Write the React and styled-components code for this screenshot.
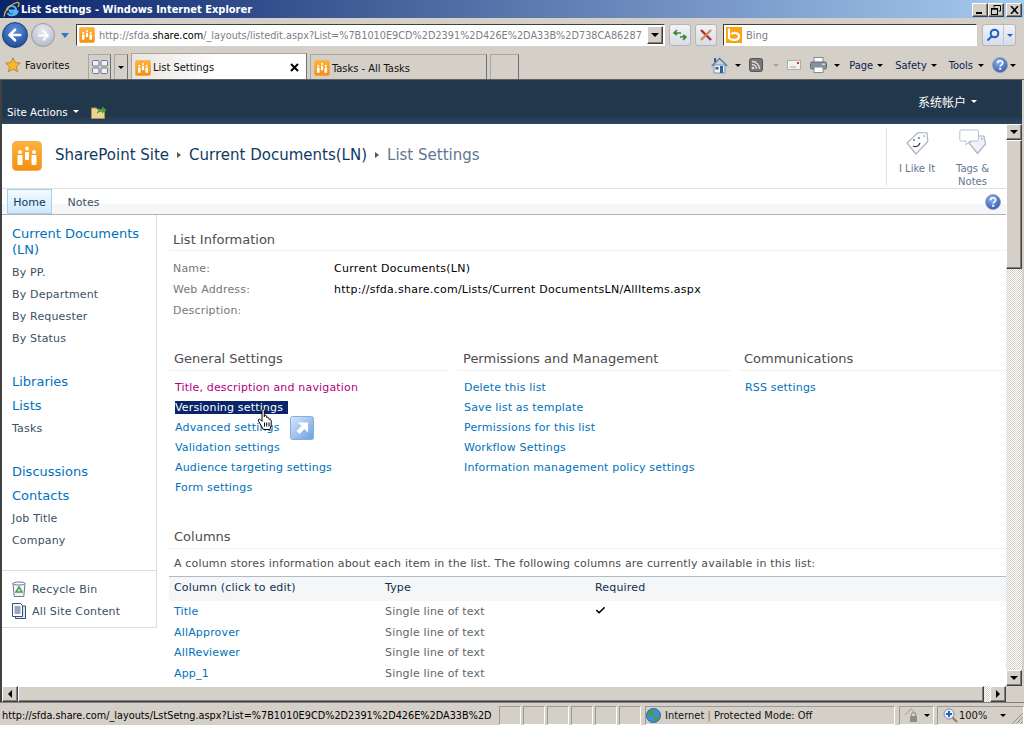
import styled, { createGlobalStyle } from "styled-components";
import { ArrowLeft, ArrowRight, Check } from "lucide-react";

const GlobalStyle = createGlobalStyle`
  html, body {
    margin: 0;
    padding: 0;
    background: #fff;
    overflow: hidden;
  }
  * { box-sizing: border-box; }
`;

const chrome = `"DejaVu Sans Condensed", "Noto Sans", Tahoma, sans-serif`;
const verdana = `"DejaVu Sans", Verdana, sans-serif`;
const bevel = `
  background: #d4d0c8;
  border-style: solid;
  border-width: 1px;
  border-color: #fff #404040 #404040 #fff;
  box-shadow: inset -1px -1px 0 #808080;
`;

const generalLinks = [
  "Versioning settings",
  "Advanced settings",
  "Validation settings",
  "Audience targeting settings",
  "Form settings",
];
const permissionLinks = [
  "Delete this list",
  "Save list as template",
  "Permissions for this list",
  "Workflow Settings",
  "Information management policy settings",
];
const columns = [
  { name: "Title", required: true, height: 21 },
  { name: "AllApprover", height: 21 },
  { name: "AllReviewer", height: 19 },
  { name: "App_1", height: 23 },
];

function SiteIcon({ size = 16 }) {
  return (
    <svg width={size} height={size} viewBox="0 0 30 30" style={{ flex: "none" }}>
      <defs>
        <linearGradient id="siteOrange" x1="0" y1="0" x2="0" y2="1">
          <stop offset="0" stopColor="#ffb33a" />
          <stop offset="1" stopColor="#f78e0c" />
        </linearGradient>
      </defs>
      <rect x="0.5" y="0.5" width="29" height="29" rx="4" fill="url(#siteOrange)" stroke="#e8b060" />
      <g fill="#fff">
        <circle cx="8" cy="11" r="2" />
        <rect x="5.5" y="14" width="5" height="10" rx="1" />
        <circle cx="15" cy="7.5" r="2" />
        <rect x="13" y="11" width="4" height="8" rx="1" />
        <circle cx="22" cy="11" r="2" />
        <rect x="19.5" y="14" width="5" height="10" rx="1" />
      </g>
    </svg>
  );
}

function IeLogo() {
  return (
    <svg width="17" height="17" viewBox="0 0 17 17">
      <path d="M4 9.5a4.6 4.6 0 0 1 9.2 0H6.6c.2 2.6 3.6 3 5.6 1h2.4c-1.8 4.4-8 5-10.2 1.4" fill="none" stroke="#58b4ee" strokeWidth="2" />
      <path d="M1.5 15.5C.2 12 6 3.500 14 1.500c2.500-.5 2.500 2 1 4.500" fill="none" stroke="#f2b632" strokeWidth="1.200" />
    </svg>
  );
}

function StarIcon() {
  return (
    <svg width="16" height="16" viewBox="0 0 16 16">
      <path d="M8 .8l2.200 4.700 5 .6-3.700 3.500 1 5.100L8 12.200l-4.500 2.500 1-5.100L.8 6.100l5-.6z" fill="#f9b82c" stroke="#b8741a" strokeWidth=".8" />
    </svg>
  );
}

function QuickTabsIcon() {
  return (
    <svg width="16" height="14" viewBox="0 0 16 14" fill="#eef0f6" stroke="#6f7893">
      <rect x=".5" y=".5" width="6.500" height="5.500" rx="1" />
      <rect x="9" y=".5" width="6.500" height="5.500" rx="1" />
      <rect x=".5" y="8" width="6.500" height="5.500" rx="1" />
      <rect x="9" y="8" width="6.500" height="5.500" rx="1" />
    </svg>
  );
}

function BingIcon() {
  return (
    <svg width="16" height="16" viewBox="0 0 16 16">
      <rect width="16" height="16" fill="#f9a40f" />
      <path d="M3 1.500v9.500c3 3 10 2.500 10-1.500 0-4-6-4.500-7.500-2" fill="none" stroke="#fff" strokeWidth="2.200" />
    </svg>
  );
}

function RefreshIcon() {
  return (
    <svg width="14" height="14" viewBox="0 0 14 14" fill="none" stroke="#3d8a2c" strokeWidth="1.700">
      <path d="M1.500 5H8M4 2L1 5l3 2" />
      <path d="M12.500 9H7M10 12l3-3-3-2" />
    </svg>
  );
}

function StopIcon() {
  return (
    <svg width="12" height="12" viewBox="0 0 12 12" fill="none" strokeWidth="2.400">
      <path d="M1 1l10 10" stroke="#a53040" />
      <path d="M11 1L1 11" stroke="#d68a4a" />
    </svg>
  );
}

function SearchIcon() {
  return (
    <svg width="14" height="14" viewBox="0 0 14 14" fill="none" stroke="#1c5fd0" strokeWidth="2">
      <circle cx="8.500" cy="5.500" r="3.800" />
      <path d="M5.500 8.500L1.500 12.500" />
    </svg>
  );
}

function HomeIcon() {
  return (
    <svg width="17" height="17" viewBox="0 0 17 17">
      <path d="M3 8v8h11V8z" fill="#eef3fa" stroke="#7a8fa8" />
      <path d="M.8 9l7.700-7.500L16.200 9" fill="none" stroke="#4f7fb8" strokeWidth="1.500" />
      <rect x="3" y="1" width="2" height="4" fill="#2e5f9e" />
      <rect x="9" y="9" width="3" height="7" fill="#2e5f9e" />
      <rect x="4.500" y="10" width="3" height="2.500" fill="#2e5f9e" />
    </svg>
  );
}

function FeedIcon() {
  return (
    <svg width="14" height="14" viewBox="0 0 14 14">
      <rect x=".5" y=".5" width="13" height="13" rx="2" fill="#77777a" stroke="#555" />
      <circle cx="4" cy="10" r="1.300" fill="#ddd" />
      <path d="M3 6.500a4.500 4.500 0 0 1 4.500 4.500M3 3.500a7.500 7.500 0 0 1 7.500 7.500" fill="none" stroke="#ddd" strokeWidth="1.300" />
    </svg>
  );
}

function MailIcon() {
  return (
    <svg width="14" height="10" viewBox="0 0 14 10">
      <rect x=".5" y=".5" width="13" height="9" fill="#f1f0ec" stroke="#b0aea8" />
      <rect x="10" y="2" width="2" height="2" fill="#c04040" />
      <path d="M3 7h6" stroke="#aaa" />
    </svg>
  );
}

function PrintIcon() {
  return (
    <svg width="17" height="16" viewBox="0 0 17 16">
      <rect x="4" y=".5" width="9" height="5" fill="#fff" stroke="#8a8a8a" />
      <rect x=".5" y="5" width="16" height="7" rx="1.500" fill="#8793a0" stroke="#5f6872" />
      <rect x="4" y="10" width="9" height="5.500" fill="#fff" stroke="#8a8a8a" />
      <rect x="12" y="6.500" width="3" height="1.500" fill="#bfe0f0" />
    </svg>
  );
}

function HelpIcon({ size = 16 }) {
  return (
    <svg width={size} height={size} viewBox="0 0 16 16">
      <defs>
        <radialGradient id="helpBlue" cx=".4" cy=".3" r=".8">
          <stop offset="0" stopColor="#8fb0e8" />
          <stop offset="1" stopColor="#2b55a8" />
        </radialGradient>
      </defs>
      <circle cx="8" cy="8" r="7.500" fill="url(#helpBlue)" stroke="#8f98ad" strokeWidth=".7" />
      <path d="M5.500 6.200c0-3.200 5.200-3.200 5.200-.2 0 1.900-2.500 1.800-2.500 3.600" fill="none" stroke="#fff" strokeWidth="1.700" />
      <rect x="7.200" y="10.800" width="2" height="2" fill="#fff" />
    </svg>
  );
}

function FolderUpIcon() {
  return (
    <svg width="16" height="15" viewBox="0 0 16 15">
      <path d="M.5 4h5l1 1.500h7v9H.5z" fill="#e9d68e" stroke="#a59256" />
      <path d="M6 10c0-3 2-5 5-5V2.500L15.500 6 11 9.500V7.500c-2 0-4 1-5 2.500z" fill="#4c9a3c" />
    </svg>
  );
}

function LikeIcon() {
  return (
    <svg width="26" height="26" viewBox="0 0 26 26">
      <path d="M3 13L14 2.500l9 .5.800 8.500L12 24z" fill="#fff" stroke="#aab4c8" strokeWidth="1.200" />
      <circle cx="20" cy="6" r="1" fill="#aab4c8" />
      <path d="M10 9v2M15 7v2" stroke="#333" />
      <path d="M9 16c3 1.500 6 0 7-3" fill="none" stroke="#333" strokeWidth="1.200" />
    </svg>
  );
}

function TagsIcon() {
  return (
    <svg width="28" height="28" viewBox="0 0 28 26">
      <path d="M10 14l7-7h8l1.500 8-8 9.500z" fill="#eef1f6" stroke="#aab4c8" strokeWidth="1.200" />
      <circle cx="23" cy="10" r="1" fill="#aab4c8" />
      <path d="M2 1h16a1.500 1.500 0 0 1 1.500 1.500v8a1.500 1.500 0 0 1-1.500 1.500h-7l-4 4v-4H2A1.500 1.500 0 0 1 .8 10.500v-8A1.500 1.500 0 0 1 2 1z" fill="#fff" stroke="#b8c0d0" />
    </svg>
  );
}

function RecycleIcon() {
  return (
    <svg width="14" height="16" viewBox="0 0 14 16">
      <path d="M1 2.500h12l-1.200 13H2.200z" fill="#f2f4f8" stroke="#6a7890" />
      <ellipse cx="7" cy="2.500" rx="6" ry="1.500" fill="#fff" stroke="#6a7890" />
      <path d="M7 6l3 5H4z" fill="none" stroke="#4b9a58" strokeWidth="1.500" />
    </svg>
  );
}

function ContentIcon() {
  return (
    <svg width="14" height="16" viewBox="0 0 14 16">
      <path d="M3.500 3h10v12.500h-10z" fill="#dfe6f2" stroke="#37507a" />
      <path d="M.5.500h8l2 2v11h-10z" fill="#fff" stroke="#37507a" />
      <path d="M2.500 4h6M2.500 6h6M2.500 8h6M2.500 10h6" stroke="#37507a" />
    </svg>
  );
}

function GlobeIcon() {
  return (
    <svg width="15" height="15" viewBox="0 0 16 16">
      <circle cx="8" cy="8" r="7.500" fill="#3f8fd8" stroke="#2f5f8f" />
      <path d="M3 4c2-2 5-2 6 0s-1 3-2 4-2 2-3 1-2-3-1-5zM9 10c2-1 4-1 5 0-1 3-3 4-5 4-1-1-1-3 0-4z" fill="#4f9a45" />
    </svg>
  );
}

function LockIcon() {
  return (
    <svg width="15" height="15" viewBox="0 0 15 15">
      <path d="M1 7l6-6 6 6" fill="none" stroke="#b4b2ac" strokeWidth="1.500" />
      <rect x="6" y="8" width="7" height="6" fill="#8f8d88" />
      <path d="M7.500 8V6.500a2 2 0 0 1 4 0V8" fill="none" stroke="#8f8d88" />
    </svg>
  );
}

function ZoomIcon() {
  return (
    <svg width="15" height="15" viewBox="0 0 15 15">
      <circle cx="6" cy="6" r="5" fill="#e8f0fa" stroke="#7f8ea5" />
      <path d="M6 3v6M3 6h6" stroke="#2660c8" strokeWidth="2" />
      <path d="M9.500 9.500l4.500 4.500" stroke="#a0785a" strokeWidth="2" />
    </svg>
  );
}

function ResizeGrip() {
  return (
    <svg width="12" height="12" viewBox="0 0 12 12" fill="none" stroke="#8e8c86">
      <path d="M11.500 1.500l-10 10M11.500 5.500l-6 6M11.500 9.500l-2 2" />
    </svg>
  );
}

function HandCursor() {
  return (
    <svg width="18" height="23" viewBox="0 0 18 23">
      <path
        d="M5 1.500c1-.9 2.300-.3 2.300 1v6.200l.3-1c1-.7 2-.2 2 .7l.2 1.300c.9-.8 2-.3 2 .7l.2 1c1-.6 2.200 0 2.200 1.200v4.600l-1.300 4.300H6.300L1.500 13c-.8-1.200.6-2.500 1.800-1.500L5 13.300z"
        fill="#fff"
        stroke="#000"
      />
      <path d="M7.500 14.500v4M9.700 14.500v4M12 14.500v4" stroke="#000" />
    </svg>
  );
}

function ShortcutBadge() {
  return (
    <svg width="24" height="24" viewBox="0 0 24 24">
      <defs>
        <linearGradient id="badgeBlue" x1="0" y1="0" x2="1" y2="1">
          <stop offset="0" stopColor="#d8e8fa" />
          <stop offset="1" stopColor="#6d9fe0" />
        </linearGradient>
      </defs>
      <rect x=".5" y=".5" width="23" height="23" rx="2" fill="url(#badgeBlue)" stroke="#82aee4" />
      <path d="M8 6.500h10v10l-3.500-3.500-5 5-3-3 5-5z" fill="#fff" />
    </svg>
  );
}

function Caret({ color = "#000", size = 3 }) {
  return <CaretShape $color={color} $size={size} />;
}

export default function App() {
  return (
    <Window>
      <GlobalStyle />
      <TitleBar>
        <IeLogo />
        <TitleText>List Settings - Windows Internet Explorer</TitleText>
        <WindowButtons>
          <WindowButton>
            <svg width="8" height="8" viewBox="0 0 8 8"><rect y="6" width="6" height="2" /></svg>
          </WindowButton>
          <WindowButton>
            <svg width="10" height="10" viewBox="0 0 10 10" fill="none" stroke="#000">
              <path d="M3 2.500V.5h6.500v5.500H7.500" strokeWidth="1" />
              <rect x=".5" y="3.500" width="6" height="6" />
              <path d="M1 4h5" strokeWidth="1.500" />
            </svg>
          </WindowButton>
          <WindowButton $gap>
            <svg width="9" height="8" viewBox="0 0 9 8" stroke="#000" strokeWidth="1.500"><path d="M1 0l7 8M8 0L1 8" /></svg>
          </WindowButton>
        </WindowButtons>
      </TitleBar>

      <NavRow>
        <NavDisc>
          <ArrowLeft size={18} color="#fff" strokeWidth={3.5} />
        </NavDisc>
        <NavDisc $off>
          <ArrowRight size={15} color="#fff" strokeWidth={3} />
        </NavDisc>
        <RecentCaret />
        <AddressBox>
          <SiteIcon size={16} />
          <AddressText>
            http://sfda.<b>share.com</b>/_layouts/listedit.aspx?List=%7B1010E9CD%2D2391%2D426E%2DA33B%2D738CA86287
          </AddressText>
          <ComboButton><Caret size={4} /></ComboButton>
        </AddressBox>
        <SoftButton><RefreshIcon /></SoftButton>
        <SoftButton><StopIcon /></SoftButton>
        <SearchBox>
          <BingIcon />
          <SearchText>Bing</SearchText>
        </SearchBox>
        <SearchButtons>
          <SearchGo><SearchIcon /></SearchGo>
          <SearchMore><Caret color="#1c5fd0" /></SearchMore>
        </SearchButtons>
      </NavRow>

      <ToolRow>
        <Favorites>
          <StarIcon />
          <span>Favorites</span>
        </Favorites>
        <SquareTab $width={23}><QuickTabsIcon /></SquareTab>
        <SquareTab $width={14}><Caret /></SquareTab>
        <Tab $active>
          <SiteIcon size={16} />
          <TabLabel>List Settings</TabLabel>
          <TabClose>
            <svg width="9" height="9" viewBox="0 0 9 9" stroke="#000" strokeWidth="2"><path d="M1 1l7 7M8 1L1 8" /></svg>
          </TabClose>
        </Tab>
        <Tab>
          <SiteIcon size={16} />
          <TabLabel>Tasks - All Tasks</TabLabel>
        </Tab>
        <SquareTab $width={29} />
        <Commands>
          <Command $gap={7}><HomeIcon /><Caret /></Command>
          <Command $gap={10} $left={8}><FeedIcon /><Caret color="#a8a69f" /></Command>
          <Command $left={8}><MailIcon /></Command>
          <Command $gap={7} $left={9}><PrintIcon /><Caret /></Command>
          <Command $gap={4} $left={9}>Page<Caret /></Command>
          <Command $gap={4} $left={12}>Safety<Caret /></Command>
          <Command $gap={5} $left={12}>Tools<Caret /></Command>
          <Command $gap={2} $left={8}><HelpIcon /><Caret /></Command>
        </Commands>
      </ToolRow>

      <SiteBand>
        <SiteActions>
          <span>Site Actions</span>
          <Caret color="#fff" />
          <FolderSlot><FolderUpIcon /></FolderSlot>
        </SiteActions>
        <Account>
          <span>系统帐户</span>
          <Caret color="#fff" />
        </Account>
      </SiteBand>

      <Viewport>
        <PageArea>
          <TitleRow>
            <SiteIcon size={30} />
            <Breadcrumb>
              <span>SharePoint Site</span>
              <CrumbArrow />
              <span>Current Documents(LN)</span>
              <CrumbArrow />
              <CrumbCurrent>List Settings</CrumbCurrent>
            </Breadcrumb>
            <Social>
              <SocialItem $width={60} $top={2}><LikeIcon /><span>I Like It</span></SocialItem>
              <SocialItem $width={51}><TagsIcon /><span>Tags &amp;<br />Notes</span></SocialItem>
            </Social>
          </TitleRow>

          <TabStrip>
            <PageTab $active>Home</PageTab>
            <PageTab>Notes</PageTab>
            <StripHelp><HelpIcon size={16} /></StripHelp>
          </TabStrip>

          <Columns>
            <SideNav>
              <SideTop>
                <NavHeading>Current Documents (LN)</NavHeading>
                <NavItem>By PP.</NavItem>
                <NavItem>By Department</NavItem>
                <NavItem>By Requester</NavItem>
                <NavItem>By Status</NavItem>
                <NavHeading $top={24}>Libraries</NavHeading>
                <NavHeading $top={8}>Lists</NavHeading>
                <NavItem>Tasks</NavItem>
                <NavHeading $top={24}>Discussions</NavHeading>
                <NavHeading $top={8}>Contacts</NavHeading>
                <NavItem>Job Title</NavItem>
                <NavItem>Company</NavItem>
              </SideTop>
              <SideBottom>
                <SideLink><RecycleIcon />Recycle Bin</SideLink>
                <SideLink><ContentIcon />All Site Content</SideLink>
              </SideBottom>
            </SideNav>

            <Content>
              <InfoHeading>List Information</InfoHeading>
              <InfoRows>
                <InfoRow><InfoLabel>Name:</InfoLabel><InfoValue>Current Documents(LN)</InfoValue></InfoRow>
                <InfoRow><InfoLabel>Web Address:</InfoLabel><InfoValue>http://sfda.share.com/Lists/Current DocumentsLN/AllItems.aspx</InfoValue></InfoRow>
                <InfoRow><InfoLabel>Description:</InfoLabel><InfoValue /></InfoRow>
              </InfoRows>

              <Settings>
                <SettingsColumn>
                  <SectionHeading>General Settings</SectionHeading>
                  <SettingsLink $visited>Title, description and navigation</SettingsLink>
                  {generalLinks.map((link, i) => (
                    <SettingsLink key={link}>
                      {i === 0 ? <Selected>{link}</Selected> : link}
                    </SettingsLink>
                  ))}
                  <BadgeLayer><ShortcutBadge /></BadgeLayer>
                  <CursorLayer><HandCursor /></CursorLayer>
                </SettingsColumn>
                <SettingsColumn>
                  <SectionHeading>Permissions and Management</SectionHeading>
                  {permissionLinks.map((link) => (
                    <SettingsLink key={link}>{link}</SettingsLink>
                  ))}
                </SettingsColumn>
                <SettingsColumn>
                  <SectionHeading>Communications</SectionHeading>
                  <SettingsLink>RSS settings</SettingsLink>
                </SettingsColumn>
              </Settings>

              <SectionHeading>Columns</SectionHeading>
              <ColumnsNote>A column stores information about each item in the list. The following columns are currently available in this list:</ColumnsNote>
              <TableHead>
                <span>Column (click to edit)</span>
                <span>Type</span>
                <span>Required</span>
              </TableHead>
              {columns.map((col) => (
                <TableRow key={col.name} $height={col.height}>
                  <ColumnName>{col.name}</ColumnName>
                  <ColumnType>Single line of text</ColumnType>
                  <span>{col.required && <Check size={11} color="#000" strokeWidth={3.5} />}</span>
                </TableRow>
              ))}
            </Content>
          </Columns>
        </PageArea>

        <VScroll>
          <ScrollButton><Caret size={4} /></ScrollButton>
          <VThumb />
          <Checker />
          <ScrollButton><DownCaret /></ScrollButton>
        </VScroll>
      </Viewport>

      <HScroll>
        <ScrollButton><LeftCaret /></ScrollButton>
        <HThumb />
        <Checker $narrow />
        <ScrollButton><RightCaret /></ScrollButton>
        <ScrollCorner />
      </HScroll>

      <StatusBar>
        <StatusUrl>http://sfda.share.com/_layouts/LstSetng.aspx?List=%7B1010E9CD%2D2391%2D426E%2DA33B%2D</StatusUrl>
        {[1, 2, 3, 4, 5, 6].map((n) => <StatusCell key={n} />)}
        <ZoneCell>
          <GlobeIcon />
          <span>Internet <ZoneBar>|</ZoneBar> Protected Mode: Off</span>
        </ZoneCell>
        <SecurityCell><LockIcon /><Caret /></SecurityCell>
        <ZoomCell>
          <ZoomIcon />
          <span>100%</span>
          <ZoomCaret><Caret /></ZoomCaret>
          <GripSlot><ResizeGrip /></GripSlot>
        </ZoomCell>
      </StatusBar>
    </Window>
  );
}

const Window = styled.div`
  width: 1024px;
  height: 726px;
  display: flex;
  flex-direction: column;
  background: #d4d0c8;
  font-family: ${chrome};
  font-size: 11px;
  color: #111;
  overflow: hidden;
`;

const CaretShape = styled.i`
  display: inline-block;
  flex: none;
  width: 0;
  height: 0;
  border-left: ${(p) => p.$size}px solid transparent;
  border-right: ${(p) => p.$size}px solid transparent;
  border-top: ${(p) => p.$size}px solid ${(p) => p.$color};
`;

const TitleBar = styled.div`
  height: 18px;
  flex: none;
  display: flex;
  align-items: center;
  padding: 0 2px 0 3px;
  background: linear-gradient(90deg, #0a246a, #a6caf0);
`;

const TitleText = styled.span`
  margin-left: 1px;
  color: #fff;
  font-weight: bold;
  font-size: 11px;
`;

const WindowButtons = styled.div`
  margin-left: auto;
  display: flex;
  margin-top: 1px;
`;

const WindowButton = styled.div`
  ${bevel}
  width: 16px;
  height: 14px;
  margin-left: ${(p) => (p.$gap ? 2 : 0)}px;
  display: flex;
  align-items: center;
  justify-content: center;
`;

const NavRow = styled.div`
  height: 34px;
  flex: none;
  display: flex;
  align-items: center;
  padding-left: 2px;
`;

const NavDisc = styled.div`
  flex: none;
  width: ${(p) => (p.$off ? 24 : 26)}px;
  height: ${(p) => (p.$off ? 24 : 26)}px;
  margin-left: ${(p) => (p.$off ? 3 : 0)}px;
  border-radius: 50%;
  display: flex;
  align-items: center;
  justify-content: center;
  border: 1px solid ${(p) => (p.$off ? "#9a9a9a" : "#1c3f7a")};
  background: ${(p) =>
    p.$off
      ? "radial-gradient(circle at 50% 30%, #e8ecf4, #a9b1c2)"
      : "radial-gradient(circle at 50% 30%, #5c8fdc, #12418c)"};
`;

const RecentCaret = styled.div`
  width: 0;
  height: 0;
  margin-left: 6px;
  border-left: 4px solid transparent;
  border-right: 4px solid transparent;
  border-top: 5px solid #2d79c8;
`;

const AddressBox = styled.div`
  width: 589px;
  height: 22px;
  margin-left: 7px;
  display: flex;
  align-items: center;
  padding-left: 2px;
  background: #fff;
  border: 1px solid;
  border-color: #404040 #fff #fff #404040;
`;

const AddressText = styled.div`
  flex: 1;
  min-width: 0;
  margin-left: 4px;
  color: #808080;
  white-space: nowrap;
  font-size: 10.8px;
  b {
    font-weight: normal;
    color: #000;
  }
`;

const ComboButton = styled.div`
  ${bevel}
  flex: none;
  width: 16px;
  height: 18px;
  margin-right: 1px;
  display: flex;
  align-items: center;
  justify-content: center;
`;

const SoftButton = styled.div`
  flex: none;
  width: 22px;
  height: 22px;
  margin-left: 4px;
  display: flex;
  align-items: center;
  justify-content: center;
  border: 1px solid #b5b5bd;
  border-radius: 3px;
  background: linear-gradient(#f2f3f7, #d9dce6);
`;

const SearchBox = styled.div`
  width: 254px;
  height: 22px;
  margin-left: 6px;
  padding-left: 2px;
  display: flex;
  align-items: center;
  background: #fff;
  border: 1px solid;
  border-color: #404040 #fff #fff #404040;
`;

const SearchText = styled.span`
  margin-left: 4px;
  color: #808080;
  font-size: 11px;
`;

const SearchButtons = styled.div`
  flex: none;
  margin-left: 5px;
  height: 22px;
  width: 34px;
  display: flex;
  border: 1px solid #b5b5bd;
  border-radius: 3px;
  background: linear-gradient(#f2f3f7, #d9dce6);
`;

const SearchGo = styled.div`
  width: 21px;
  display: flex;
  align-items: center;
  justify-content: center;
  border-right: 1px solid #c4c6d0;
`;

const SearchMore = styled.div`
  flex: 1;
  display: flex;
  align-items: center;
  justify-content: center;
`;

const ToolRow = styled.div`
  height: 28px;
  flex: none;
  display: flex;
  align-items: flex-end;
  padding-left: 5px;
  border-bottom: 1px solid #606060;
`;

const Favorites = styled.div`
  width: 83px;
  height: 26px;
  align-self: flex-start;
  display: flex;
  align-items: center;
  gap: 4px;
`;

const SquareTab = styled.div`
  flex: none;
  width: ${(p) => p.$width}px;
  height: 25px;
  margin-right: 3px;
  display: flex;
  align-items: center;
  justify-content: center;
  border: 1px solid #a8a6a0;
  border-bottom: none;
  border-right-color: #707070;
`;

const Tab = styled.div`
  flex: none;
  width: ${(p) => (p.$active ? 176 : 177)}px;
  height: ${(p) => (p.$active ? 26 : 25)}px;
  margin-right: 3px;
  display: flex;
  align-items: center;
  padding: 2px 3px 0 3px;
  border: 1px solid #a8a6a0;
  border-bottom: none;
  border-right-color: #707070;
  background: ${(p) => (p.$active ? "linear-gradient(90deg, #e8e5e0, #fff 50%)" : "#d4d0c8")};
`;

const TabLabel = styled.span`
  margin-left: 2px;
`;

const TabClose = styled.span`
  margin-left: auto;
  margin-right: 4px;
  display: flex;
`;

const Commands = styled.div`
  margin-left: auto;
  align-self: flex-start;
  height: 26px;
  display: flex;
  align-items: center;
  padding-right: 8px;
  color: #0c1b4a;
`;

const Command = styled.div`
  display: flex;
  align-items: center;
  gap: ${(p) => p.$gap || 0}px;
  margin-left: ${(p) => p.$left || 0}px;
`;

const Viewport = styled.div`
  flex: 1;
  min-height: 0;
  display: flex;
  border-left: 2px solid #404040;
  border-right: 2px solid #d4d0c8;
`;

const PageArea = styled.div`
  flex: 1;
  min-width: 0;
  display: flex;
  flex-direction: column;
  background: #fff;
  overflow: hidden;
`;

const SiteBand = styled.div`
  height: 44px;
  flex: none;
  display: flex;
  align-items: flex-end;
  justify-content: space-between;
  color: #fff;
  background: linear-gradient(#21374c 82%, #2e4660);
  border-left: 2px solid #404040;
  border-right: 2px solid #d4d0c8;
  font-family: ${verdana};
  font-size: 10.3px;
`;

const SiteActions = styled.div`
  display: flex;
  align-items: center;
  padding: 0 0 5px 5px;
  gap: 5px;
`;

const FolderSlot = styled.span`
  margin-left: 7px;
  display: flex;
`;

const Account = styled.div`
  align-self: flex-start;
  margin: 13px 45px 0 0;
  display: flex;
  align-items: center;
  gap: 5px;
  font-family: "Noto Sans CJK SC", sans-serif;
  font-size: 12px;
`;

const TitleRow = styled.div`
  height: 65px;
  flex: none;
  display: flex;
  align-items: center;
  padding-left: 10px;
  border-bottom: 1px solid #e0e0e0;
`;

const Breadcrumb = styled.div`
  display: flex;
  align-items: center;
  margin-left: 13px;
  margin-bottom: 2px;
  font-family: ${verdana};
  font-size: 15px;
  color: #0f3a5f;
`;

const CrumbArrow = styled.i`
  width: 0;
  height: 0;
  margin: 0 8px;
  border-top: 3.500px solid transparent;
  border-bottom: 3.500px solid transparent;
  border-left: 4px solid #555;
`;

const CrumbCurrent = styled.span`
  color: #5f7791;
`;

const Social = styled.div`
  align-self: stretch;
  margin-left: auto;
  margin-top: 4px;
  margin-bottom: 3px;
  display: flex;
  padding-right: 8px;
  border-left: 1px solid #e0e0e0;
  font-family: ${verdana};
  font-size: 10px;
  line-height: 13px;
  color: #5f7791;
`;

const SocialItem = styled.div`
  width: ${(p) => p.$width}px;
  padding-top: ${(p) => p.$top || 0}px;
  display: flex;
  flex-direction: column;
  align-items: center;
  text-align: center;
  gap: 6px;
  svg {
    flex: none;
  }
`;

const TabStrip = styled.div`
  height: 26px;
  flex: none;
  display: flex;
  align-items: stretch;
  padding-left: 5px;
  font-family: ${verdana};
  font-size: 11px;
  background: linear-gradient(#fff 60%, #f5f6f7 60%);
  border-bottom: 1px solid #b3b3b3;
`;

const PageTab = styled.div`
  width: 45px;
  height: 25px;
  margin-right: 9px;
  padding-top: 1px;
  display: flex;
  align-items: center;
  justify-content: center;
  color: ${(p) => (p.$active ? "#0f3a5f" : "#3b4f65")};
  border: 1px solid ${(p) => (p.$active ? "#9fd0f5" : "transparent")};
  background: ${(p) => (p.$active ? "linear-gradient(#f4fbff, #cfe8fb)" : "none")};
`;

const StripHelp = styled.span`
  margin-left: auto;
  margin-right: 5px;
  display: flex;
  align-items: center;
`;

const Columns = styled.div`
  flex: 1;
  min-height: 0;
  display: flex;
  font-family: ${verdana};
  font-size: 11px;
  letter-spacing: 0.17px;
`;

const SideNav = styled.div`
  flex: none;
  width: 155px;
  align-self: flex-start;
  border-right: 1px solid #dbddde;
  border-bottom: 1px solid #dbddde;
`;

const SideTop = styled.div`
  height: 356px;
  padding: 11px 0 0 10px;
  border-bottom: 1px solid #dbddde;
`;

const NavHeading = styled.div`
  margin-top: ${(p) => p.$top || 0}px;
  width: 135px;
  line-height: 16px;
  font-size: 13px;
  letter-spacing: 0;
  color: #0072bc;
`;

const NavItem = styled.div`
  height: 22px;
  line-height: 22px;
  color: #3b4f65;
  ${NavHeading} + & {
    margin-top: 4px;
  }
`;

const SideBottom = styled.div`
  padding: 7px 0 5px 10px;
`;

const SideLink = styled.div`
  height: 22px;
  display: flex;
  align-items: center;
  gap: 6px;
  color: #3b4f65;
`;

const Content = styled.div`
  flex: 1;
  min-width: 0;
  padding-left: 12px;
`;

const InfoHeading = styled.div`
  height: 36px;
  padding-top: 17px;
  padding-left: 4px;
  font-size: 13px;
  letter-spacing: 0;
  color: #4c4c4c;
  border-bottom: 1px solid #f2f2f2;
`;

const InfoRows = styled.div`
  padding-top: 7px;
`;

const InfoRow = styled.div`
  height: 21px;
  display: flex;
  align-items: center;
  padding-left: 4px;
`;

const InfoLabel = styled.div`
  width: 161px;
  color: #777;
`;

const InfoValue = styled.div`
  color: #000;
  letter-spacing: 0.28px;
`;

const Settings = styled.div`
  margin-top: 26px;
  display: grid;
  grid-template-columns: 281px 273px 1fr;
  column-gap: 8px;
  height: 178px;
`;

const SettingsColumn = styled.div`
  position: relative;
`;

const SectionHeading = styled.div`
  height: 24px;
  margin-bottom: 7px;
  padding-left: 5px;
  font-size: 13px;
  letter-spacing: 0;
  line-height: 24px;
  color: #4c4c4c;
  border-bottom: 1px solid #f2f2f2;
`;

const SettingsLink = styled.div`
  height: 20px;
  line-height: 20px;
  padding-left: 6px;
  color: ${(p) => (p.$visited ? "#b5007f" : "#0072bc")};
`;

const Selected = styled.span`
  display: inline-block;
  line-height: 13px;
  padding-right: 5px;
  background: #0a246a;
  color: #fff;
`;

const CursorLayer = styled.div`
  position: absolute;
  left: 88px;
  top: 61px;
  display: flex;
`;

const BadgeLayer = styled.div`
  position: absolute;
  left: 121px;
  top: 69px;
  display: flex;
`;

const ColumnsNote = styled.div`
  height: 20px;
  padding: 1px 0 0 5px;
  color: #4c4c4c;
  white-space: nowrap;
`;

const rowGrid = `
  display: grid;
  grid-template-columns: 211px 210px 1fr;
  align-items: center;
  padding-left: 5px;
`;

const TableHead = styled.div`
  ${rowGrid}
  height: 25px;
  padding-bottom: 3px;
  color: #0f2f4f;
  background: #f5f6f7;
  border-top: 1px solid #b0bacb;
`;

const TableRow = styled.div`
  ${rowGrid}
  height: ${(p) => p.$height}px;
`;

const ColumnName = styled.span`
  color: #0072bc;
`;

const ColumnType = styled.span`
  color: #666;
`;

const VScroll = styled.div`
  flex: none;
  width: 16px;
  display: flex;
  flex-direction: column;
`;

const ScrollButton = styled.div`
  ${bevel}
  flex: none;
  width: 16px;
  height: 16px;
  display: flex;
  align-items: center;
  justify-content: center;
`;

const DownCaret = styled.i`
  width: 0;
  height: 0;
  border-left: 4px solid transparent;
  border-right: 4px solid transparent;
  border-top: 4px solid #000;
`;

const LeftCaret = styled.i`
  width: 0;
  height: 0;
  border-top: 4px solid transparent;
  border-bottom: 4px solid transparent;
  border-right: 4px solid #000;
`;

const RightCaret = styled.i`
  width: 0;
  height: 0;
  border-top: 4px solid transparent;
  border-bottom: 4px solid transparent;
  border-left: 4px solid #000;
`;

const VThumb = styled.div`
  ${bevel}
  flex: none;
  height: 129px;
`;

const HThumb = styled.div`
  ${bevel}
  flex: 1;
`;

const Checker = styled.div`
  flex: ${(p) => (p.$narrow ? "none" : 1)};
  width: ${(p) => (p.$narrow ? "6px" : "auto")};
  background: repeating-conic-gradient(#d4d0c8 0 25%, #fff 0 50%) 0 0 / 2px 2px;
`;

const HScroll = styled.div`
  height: 16px;
  flex: none;
  display: flex;
  border-left: 2px solid #404040;
`;

const ScrollCorner = styled.div`
  flex: none;
  width: 18px;
  background: #d4d0c8;
`;

const StatusBar = styled.div`
  height: 24px;
  flex: none;
  display: flex;
  align-items: stretch;
  padding-top: 3px;
  border-top: 1px solid #808080;
  border-bottom: 1px solid #fff;
`;

const sunken = `
  border: 1px solid;
  border-color: #9c9a94 #fff #fff #9c9a94;
`;

const StatusUrl = styled.div`
  width: 497px;
  padding-left: 2px;
  display: flex;
  align-items: center;
  white-space: nowrap;
  overflow: hidden;
  font-size: 10.8px;
  color: #000;
`;

const StatusCell = styled.div`
  ${sunken}
  width: 22px;
  margin-left: 2px;
`;

const ZoneCell = styled.div`
  ${sunken}
  width: 250px;
  margin-left: 4px;
  display: flex;
  align-items: center;
  gap: 4px;
`;

const ZoneBar = styled.span`
  color: #9a6a1e;
`;

const SecurityCell = styled.div`
  ${sunken}
  width: 35px;
  margin-left: 4px;
  display: flex;
  align-items: center;
  justify-content: center;
  gap: 5px;
`;

const ZoomCell = styled.div`
  ${sunken}
  flex: 1;
  margin-left: 3px;
  padding-left: 5px;
  display: flex;
  align-items: center;
  gap: 1px;
`;

const ZoomCaret = styled.span`
  margin-left: 12px;
  display: flex;
`;

const GripSlot = styled.span`
  margin-left: auto;
  align-self: flex-end;
  display: flex;
`;
